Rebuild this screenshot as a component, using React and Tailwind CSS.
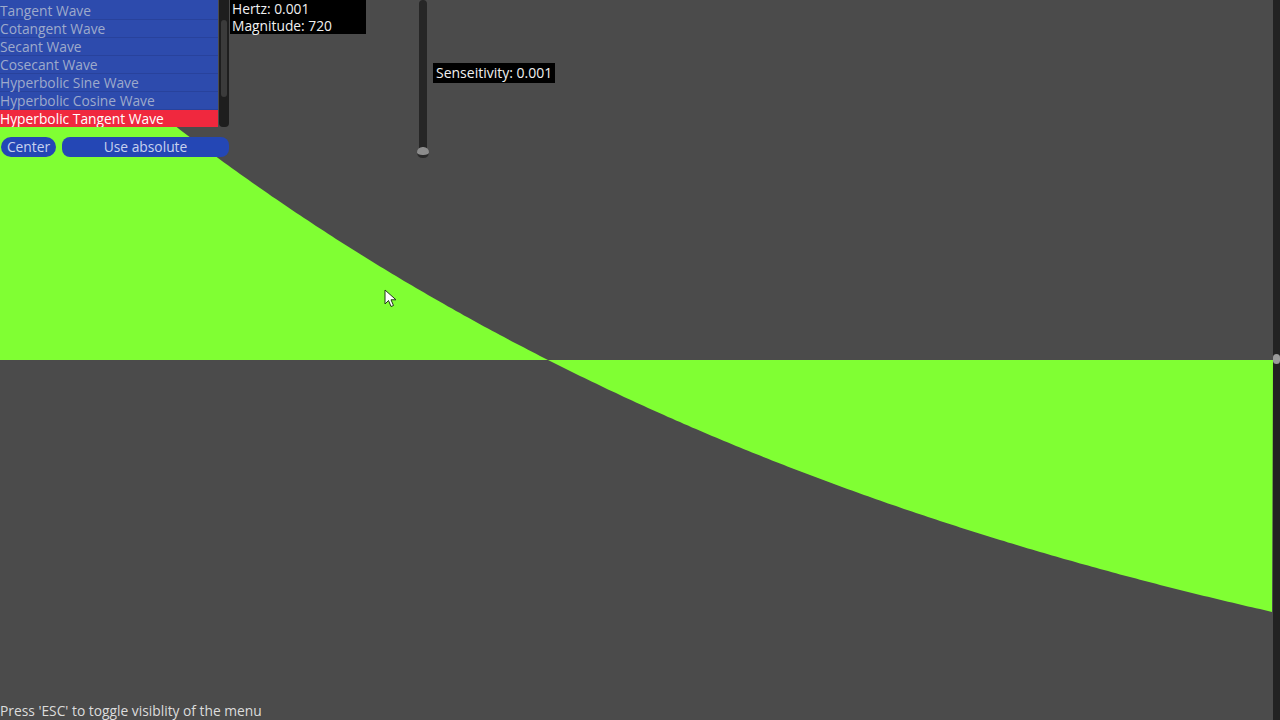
import React from "react";

const waves = [
  "Tangent Wave",
  "Cotangent Wave",
  "Secant Wave",
  "Cosecant Wave",
  "Hyperbolic Sine Wave",
  "Hyperbolic Cosine Wave",
  "Hyperbolic Tangent Wave",
];

// shape of the plotted curve, fitted to the picture
function curveY(x) {
  return 360 + 838 * (0.5439 - Math.exp(-x / 900));
}

function Plot() {
  const pts = ["0,360"];
  for (let x = 0; x <= 1273; x += 4) {
    pts.push(`${x},${curveY(x).toFixed(1)}`);
  }
  pts.push("1273,360");
  return (
    <svg className="absolute inset-0" width="1280" height="720" viewBox="0 0 1280 720">
      <polygon points={pts.join(" ")} fill="#80ff33" />
    </svg>
  );
}

function Cursor() {
  return (
    <svg className="absolute left-[384px] top-[289px]" width="14" height="20" viewBox="0 0 14 20">
      <path d="M1 1 L1 15 L4.5 11.5 L7 17.5 L9.5 16.5 L7 10.8 L12 10.8 Z" fill="#ffffff" stroke="#1f3a16" strokeWidth="1" strokeLinejoin="round" />
    </svg>
  );
}

export default function App() {
  return (
    <div
      className="relative w-[1280px] h-[720px] overflow-hidden bg-[#4b4b4b] text-[13.8px]"
      style={{ fontFamily: "'Open Sans', 'Noto Sans', sans-serif" }}
    >
      <Plot />

      {/* right edge slider */}
      <div className="absolute right-0 top-0 w-[7px] h-[720px] bg-[#222222]">
        <div className="absolute left-0 top-[354px] w-[7px] h-[10px] rounded-full bg-[#9a9a9a]" />
      </div>

      {/* wave menu */}
      <div className="absolute left-0 top-0 flex flex-col">
        <div className="flex">
          <div className="w-[218px] h-[127px] overflow-hidden bg-[#2d4bad] pt-[2px]">
            {waves.map((w, i) =>
              i === waves.length - 1 ? (
                <div key={w} className="h-[18px] leading-[18px] bg-[#f0283e] text-white whitespace-nowrap">
                  {w}
                </div>
              ) : (
                <div key={w} className="h-[18px] leading-[18px] border-b border-[#28429c] text-[#9eaacb] whitespace-nowrap">
                  {w}
                </div>
              )
            )}
          </div>
          <div className="ml-px w-[10px] h-[127px] rounded-b-[4px] bg-[#1e1e1e] flex justify-center pt-[20px]">
            <div className="w-[6px] h-[77px] rounded-[3px] bg-[#3b3b3b]" />
          </div>
        </div>
        <div className="flex mt-[10px]">
          <button className="ml-px w-[55px] h-[20px] leading-[20px] rounded-full bg-[#2447b5] text-[#c8d2ee]">
            Center
          </button>
          <button className="ml-[6px] w-[167px] h-[20px] leading-[20px] rounded-[8px] bg-[#2447b5] text-[#c8d2ee]">
            Use absolute
          </button>
        </div>
      </div>

      {/* readout */}
      <div className="absolute left-[230px] top-0 w-[136px] h-[34px] bg-black text-[#f0f0f0] px-[2px] leading-[17px]">
        <div>Hertz: 0.001</div>
        <div>Magnitude: 720</div>
      </div>

      {/* sensitivity slider */}
      <div className="absolute left-[419px] top-0 w-[8px] h-[157px] rounded-full bg-[#262626]" />
      <div className="absolute left-[417px] top-[147px] w-[12px] h-[11px] rounded-full bg-[#8c8c8c] border-b-[3px] border-[#2a2a2a]" />
      <div className="absolute left-[433px] top-[63px] h-[20px] leading-[20px] bg-black text-[#f0f0f0] text-[14px] px-[3px]">
        Senseitivity: 0.001
      </div>

      <Cursor />

      <div className="absolute left-0 bottom-0 h-[18px] leading-[18px] text-[#dcdcdc]">
        Press 'ESC' to toggle visiblity of the menu
      </div>
    </div>
  );
}
